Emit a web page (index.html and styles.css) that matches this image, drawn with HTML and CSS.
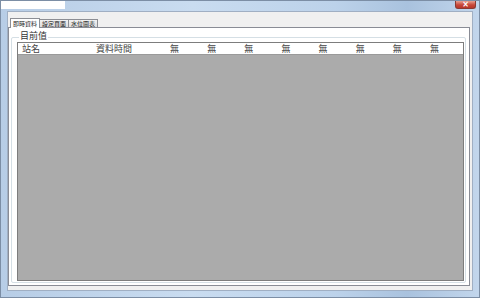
FILE: index.html
```html
<!DOCTYPE html>
<html>
<head>
<meta charset="utf-8">
<link rel="stylesheet" href="styles.css">
</head>
<body>
<div class="window">
  <div class="titlebar">
    <div class="title-box"></div>
    <div class="close-btn"><span>×</span></div>
  </div>
  <div class="client">
    <div class="tabs">
      <div class="tab active">即時資料</div>
      <div class="tab">設定頁面</div>
      <div class="tab">水位圖表</div>
    </div>
    <div class="tabpage">
      <div class="group">
        <div class="legend">目前值</div>
        <div class="grid">
          <div class="header">
            <span class="c1">站名</span>
            <span class="c2">資料時間</span>
            <span class="cn">無</span>
            <span class="cn">無</span>
            <span class="cn">無</span>
            <span class="cn">無</span>
            <span class="cn">無</span>
            <span class="cn">無</span>
            <span class="cn">無</span>
            <span class="cn">無</span>
          </div>
          <div class="body"></div>
        </div>
      </div>
    </div>
  </div>
</div>
</body>
</html>
```
FILE: styles.css
```css
html, body {
  margin: 0;
  padding: 0;
}
body {
  width: 480px;
  height: 298px;
  overflow: hidden;
  font-family: "Noto Sans CJK TC", "Liberation Sans", sans-serif;
}
.window {
  width: 480px;
  height: 298px;
  background: linear-gradient(to right, #b7cde6 0%, #c9dcf0 40%, #bcd2ea 70%, #a9c2de 85%, #c2d6ec 100%);
  display: flex;
  flex-direction: column;
  box-sizing: border-box;
  border: 1px solid #7c8ea5;
}
.titlebar {
  height: 10px;
  display: flex;
  justify-content: space-between;
  align-items: flex-start;
}
.title-box {
  width: 64px;
  height: 8px;
  background: #ffffff;
}
.close-btn {
  width: 21px;
  height: 8px;
  margin-right: 3px;
  background: linear-gradient(#e8a090, #c7483a 55%, #b8362a);
  border: 1px solid #8a3a32;
  border-top: none;
  border-radius: 0 0 3px 3px;
  box-sizing: border-box;
  display: flex;
  align-items: center;
  justify-content: center;
  color: #fff;
  font: bold 8px/1 "DejaVu Sans", sans-serif;
}
.client {
  flex: 1;
  margin: 0 6px 6px 6px;
  background: #f0f0f0;
  border: 1px solid #a0afc3;
  padding: 6px 2px 4px 0;
  display: flex;
  flex-direction: column;
}
.tabs {
  display: flex;
  height: 9px;
  align-items: flex-end;
  padding-left: 2px;
}
.tab {
  font-size: 6px;
  line-height: 8px;
  height: 8px;
  padding: 0 2px;
  border: 1px solid #8c8e94;
  border-bottom: none;
  background: linear-gradient(#f2f2f2, #dcdcdc);
  color: #222;
  box-sizing: border-box;
  margin-right: -1px;
}
.tab.active {
  height: 10px;
  line-height: 9px;
  background: #fff;
  position: relative;
  z-index: 1;
  margin-bottom: -1px;
}
.tabpage {
  flex: 1;
  background: #fff;
  border: 1px solid #898c95;
  padding: 3px 3px 2px 2px;
  display: flex;
  flex-direction: column;
}
.group {
  flex: 1;
  display: flex;
  flex-direction: column;
  position: relative;
}
.group::before {
  content: "";
  position: absolute;
  left: 0;
  right: 0;
  top: 6px;
  bottom: 0;
  border: 1px solid #d5dfe5;
  border-radius: 2px;
}
.legend {
  position: relative;
  align-self: flex-start;
  background: #fff;
  font-size: 9px;
  line-height: 10px;
  color: #333;
  margin-left: 8px;
  padding: 0 1px;
}
.grid {
  position: relative;
  flex: 1;
  margin: 1px 2px 2px 6px;
  border: 1px solid #7d7d7d;
  display: flex;
  flex-direction: column;
}
.header {
  height: 11px;
  background: #fff;
  border-bottom: 1px solid #9a9a9a;
  display: flex;
  align-items: center;
  font-size: 9px;
  line-height: 11px;
  color: #444;
}
.header span { display: block; flex: none; }
.c1 { width: 78px; padding-left: 4px; box-sizing: border-box; }
.c2 { width: 74px; }
.cn { width: 37.14px; }
.body {
  flex: 1;
  background: #ababab;
}
```
